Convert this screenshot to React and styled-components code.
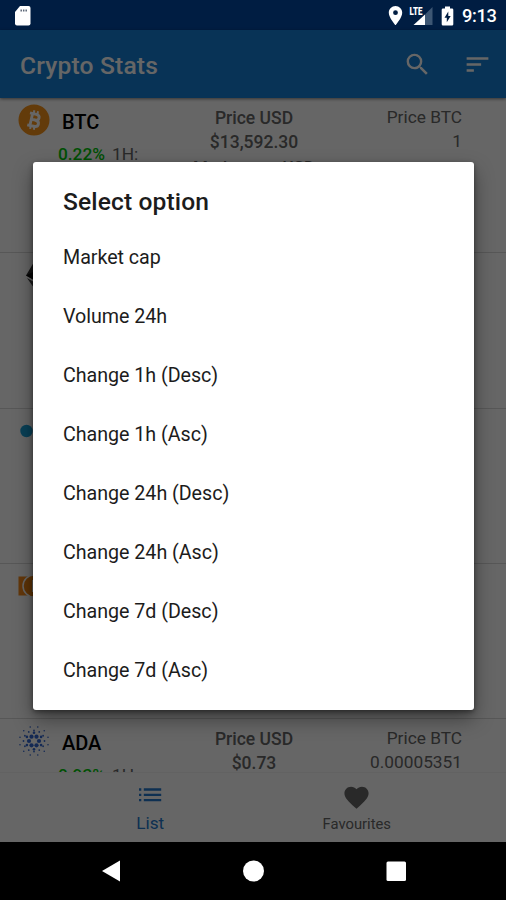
import styled, { createGlobalStyle } from "styled-components";
import { MdSearch, MdSort, MdFavorite, MdLocationOn } from "react-icons/md";

const GlobalStyle = createGlobalStyle`
  *{
    box-sizing: border-box;
  }
  body{
    margin: 0;
    background: #000;
    font-family: Roboto, "Liberation Sans", sans-serif;
  }
`

//Page
const Screen = styled.div`
  width: 506px;
  height: 900px;
  display: flex;
  flex-direction: column;
  overflow: hidden;
`
const StatusBar = styled.header`
  height: 30px;
  flex: none;
  display: flex;
  align-items: center;
  padding: 1px 8px 0 14px;
  background: #001d42;
  color: #fff;
`
const StatusIcons = styled.div`
  margin-left: auto;
  display: flex;
  align-items: center;
`
const Clock = styled.span`
  width: 36px;
  margin-left: 8px;
  font-size: 18.3px;
  font-weight: 500;
  line-height: 28px;
  letter-spacing: -0.35px;
  white-space: nowrap;
`
const Content = styled.div`
  position: relative;
  height: 812px;
  flex: none;
  display: flex;
  flex-direction: column;
  background: #fff;
`
const Scrim = styled.div`
  position: absolute;
  inset: 0;
  z-index: 1;
  display: flex;
  justify-content: center;
  align-items: flex-start;
  padding: 132px 0 0 1px;
  background: rgba(0, 0, 0, 0.6);
`

//App bar
const AppBar = styled.div`
  height: 68px;
  flex: none;
  display: flex;
  align-items: center;
  padding: 0 14px 0 20px;
  background: #1480d6;
  color: #fff;
  box-shadow: 0 1px 3px rgba(0, 0, 0, 0.5);
`
const Title = styled.h1`
  margin: 2px auto 0 0;
  font-size: 24.6px;
  font-weight: 500;
  letter-spacing: 0.17px;
`
const SortIcon = styled(MdSort)`
  margin-left: 31px;
`

//Coin list
const CoinList = styled.div`
  height: 674px;
  flex: none;
  overflow: hidden;
`
const CoinRow = styled.div`
  height: 155.3px;
  display: flex;
  padding: 7px 44px 0 18px;
  border-bottom: 1px solid #dadada;
  color: #666;
  line-height: 24px;
`
const Coin = styled.div`
  width: 150px;
`
const CoinHead = styled.div`
  height: 33px;
  display: flex;
  align-items: center;
  svg{
    margin-top: -3px;
  }
`
const Symbol = styled.strong`
  margin-left: 12px;
  color: #000;
  font-size: 20px;
  font-weight: 500;
`
const Change = styled.div`
  margin: 4px 0 0 40px;
  font-size: 17.3px;
  b{
    margin-right: 7px;
    color: #00c80a;
    font-weight: 500;
  }
`
const Usd = styled.div`
  width: 172px;
  padding-top: 1px;
  text-align: center;
  font-size: 17.5px;
  font-weight: 500;
  white-space: nowrap;
`
const MarketCap = styled.div`
  padding-top: 1px;
  font-size: 17px;
`
const Btc = styled.div`
  margin-left: auto;
  text-align: right;
  font-size: 17.3px;
`

//Bottom tabs
const Tabs = styled.nav`
  height: 70px;
  flex: none;
  display: flex;
  justify-content: center;
  padding-left: 1px;
  border-top: 1px solid #f4f4f4;
`
const Tab = styled.div`
  width: 206.5px;
  display: flex;
  flex-direction: column;
  align-items: center;
  padding-top: ${props => props.$active ? "12px" : "10px"};
  color: ${props => props.$active ? "#2478cc" : "#666"};
  font-size: ${props => props.$active ? "17.2px" : "14.8px"};
  line-height: 20px;
  svg{
    height: ${props => props.$active ? "18px" : "29px"};
    margin-bottom: ${props => props.$active ? "10px" : "2px"};
  }
`

//Dialog
const Dialog = styled.section`
  width: 441px;
  height: 547.5px;
  border-radius: 3px;
  background: #fff;
  color: #1c1c1c;
  box-shadow: 0 9px 20px rgba(0, 0, 0, 0.4), 0 2px 5px rgba(0, 0, 0, 0.4);
`
const DialogTitle = styled.h2`
  height: 65.5px;
  margin: 0;
  padding: 24px 30px 0;
  font-size: 24.6px;
  font-weight: 500;
  line-height: 31px;
  letter-spacing: 0.12px;
`
const Option = styled.div`
  height: 59.1px;
  padding: 0 30px;
  font-size: 19.7px;
  line-height: 59px;
  letter-spacing: -0.04px;
`

//Android navigation
const SystemNav = styled.footer`
  height: 58px;
  flex: none;
  background: #000;
  svg{
    display: block;
  }
`

const BtcLogo = () => (
  <svg width="32" height="32" viewBox="0 0 32 32">
    <circle cx="16" cy="16" r="15.5" fill="#f7931a" />
    <g transform="rotate(13 16 16)" fill="none" stroke="#fff" strokeWidth="2.9">
      <path d="M10.5 10H17c4.600 0 4.600 5.800 0 5.800h-4m4 0c5.600 0 5.600 6.400 0 6.400h-6.500M13.200 10v12" />
      <path d="M14.200 6.500v3.500M18 6.500v3.500M14.200 22v3.500M18 22v3.500" strokeWidth="2" />
    </g>
  </svg>
)

const EthLogo = () => (
  <svg width="32" height="32" viewBox="0 0 32 32">
    <path d="M16 3L8 16.500l8 4.500 8-4.500z" fill="#333" />
    <path d="M16 12.500L8 16.500l8 4.500 8-4.500z" fill="#111" />
    <path d="M9 19l7 10 7-10-7 4z" fill="#444" />
  </svg>
)

const XrpLogo = () => (
  <svg width="32" height="32" viewBox="0 0 32 32" fill="#18a0d8">
    <circle cx="8.500" cy="16" r="6.200" />
    <circle cx="23" cy="7" r="6" />
    <circle cx="23" cy="25" r="6" />
  </svg>
)

const BchLogo = () => (
  <svg width="32" height="32" viewBox="0 0 32 32">
    <path d="M0.500 6.500H32v19H0.500z" fill="#f78b1a" />
    <circle cx="16" cy="16" r="11" fill="#e87f10" stroke="#fff" strokeWidth="1.500" />
    <path d="M15 11h4a2.400 2.400 0 010 5h-4m4 0a2.400 2.400 0 010 5h-4V10" fill="none" stroke="#fff" strokeWidth="2" />
  </svg>
)

//Rings of the ADA mark: [dots, distance from centre, dot radius, starting angle]
const adaRings = [[6, 5, 2.1, 0], [6, 8.2, 1.3, 30], [12, 10.5, 0.9, 0], [12, 14.5, 0.8, 15]]

const AdaLogo = () => (
  <svg width="32" height="32" viewBox="0 0 32 32" fill="#3468d1">
    {adaRings.map(([count, distance, r, start]) => (
      Array.from({length: count}, (_, i) => {
        const angle = (start + i * 360 / count) * Math.PI / 180
        return <circle key={`${distance}-${i}`} cx={16 + Math.cos(angle) * distance} cy={16 + Math.sin(angle) * distance} r={r} />
      })
    ))}
  </svg>
)

const SdCard = () => (
  <svg width="17" height="20" viewBox="0 0 17 20">
    <path d="M6 0h8.500a2 2 0 012 2v15.500a2 2 0 01-2 2H3a2 2 0 01-2-2V6z" fill="#fff" />
    <path d="M7.200 3.500v2M9.700 3.500v2M12.200 3.500v2" stroke="#5d6878" strokeWidth="1.500" />
  </svg>
)

const Signal = styled.svg`
  margin: 0 8px 0 2px;
`
const LteSignal = () => (
  <Signal width="24" height="20" viewBox="0 0 24 20">
    <path d="M16 8.500L23.500 1v18H16z" fill="#3d5673" />
    <path d="M4.500 19L16 8.500V19z" fill="#fff" />
    <text x="0.500" y="8.800" fill="#fff" fontFamily="Roboto" fontSize="11" fontWeight="900" textLength="13" lengthAdjust="spacingAndGlyphs">LTE</text>
  </Signal>
)

const Battery = () => (
  <svg width="13" height="20" viewBox="0 0 13 20">
    <path d="M4 0.500h5v2h2a1.300 1.300 0 011.300 1.300v14.400a1.300 1.300 0 01-1.300 1.300H2a1.300 1.300 0 01-1.300-1.300V3.800A1.300 1.300 0 012 2.500h2z" fill="#fff" />
    <path d="M7.300 5.500L3.500 11.800h2.300v4.500l3.900-6.400H7.300z" fill="#001d42" />
  </svg>
)

const ListIcon = () => (
  <svg width="24" height="18" viewBox="0 0 24 18" fill="none" stroke="currentColor" strokeWidth="2.300">
    <path d="M1 4.500h2.300M1 9.800h2.300M1 15.100h2.300M5.800 4.500h17.400M5.800 9.800h17.400M5.800 15.100h17.400" />
  </svg>
)

const coins = [
  {symbol: "BTC", Logo: BtcLogo, change: "0.22%", usd: "$13,592.30", btc: "1"},
  {symbol: "ETH", Logo: EthLogo},
  {symbol: "XRP", Logo: XrpLogo},
  {symbol: "BCH", Logo: BchLogo},
  {symbol: "ADA", Logo: AdaLogo, change: "0.93%", usd: "$0.73", btc: "0.00005351"},
]

const options = [
  "Market cap",
  "Volume 24h",
  "Change 1h (Desc)",
  "Change 1h (Asc)",
  "Change 24h (Desc)",
  "Change 24h (Asc)",
  "Change 7d (Desc)",
  "Change 7d (Asc)",
]

const CoinItem = ({symbol, Logo, change, usd, btc}) => (
  <CoinRow>
    <Coin>
      <CoinHead>
        <Logo />
        {usd && <Symbol>{symbol}</Symbol>}
      </CoinHead>
      {change && <Change><b>{change}</b>1H:</Change>}
    </Coin>
    {usd && (
      <>
        <Usd>
          <div>Price USD</div>
          <div>{usd}</div>
          <MarketCap>Market cap USD</MarketCap>
        </Usd>
        <Btc>
          <div>Price BTC</div>
          <div>{btc}</div>
        </Btc>
      </>
    )}
  </CoinRow>
)

export default function App() {
  return (
    <>
      <GlobalStyle />
      <Screen>
        <StatusBar>
          <SdCard />
          <StatusIcons>
            <MdLocationOn size={23} />
            <LteSignal />
            <Battery />
            <Clock>9:13</Clock>
          </StatusIcons>
        </StatusBar>
        <Content>
          <AppBar>
            <Title>Crypto Stats</Title>
            <MdSearch size={29} />
            <SortIcon size={29} />
          </AppBar>
          <CoinList>
            {coins.map(coin => <CoinItem key={coin.symbol} {...coin} />)}
          </CoinList>
          <Tabs>
            <Tab $active>
              <ListIcon />
              List
            </Tab>
            <Tab>
              <MdFavorite size={29} />
              Favourites
            </Tab>
          </Tabs>
          <Scrim>
            <Dialog>
              <DialogTitle>Select option</DialogTitle>
              {options.map(option => <Option key={option}>{option}</Option>)}
            </Dialog>
          </Scrim>
        </Content>
        <SystemNav>
          <svg width="506" height="58" viewBox="0 0 506 58" fill="#fff">
            <path d="M102 29l18-10.500v21z" />
            <circle cx="253.500" cy="29" r="10.500" />
            <rect x="386.500" y="19.500" width="19.500" height="19.500" rx="1.500" />
          </svg>
        </SystemNav>
      </Screen>
    </>
  )
}
